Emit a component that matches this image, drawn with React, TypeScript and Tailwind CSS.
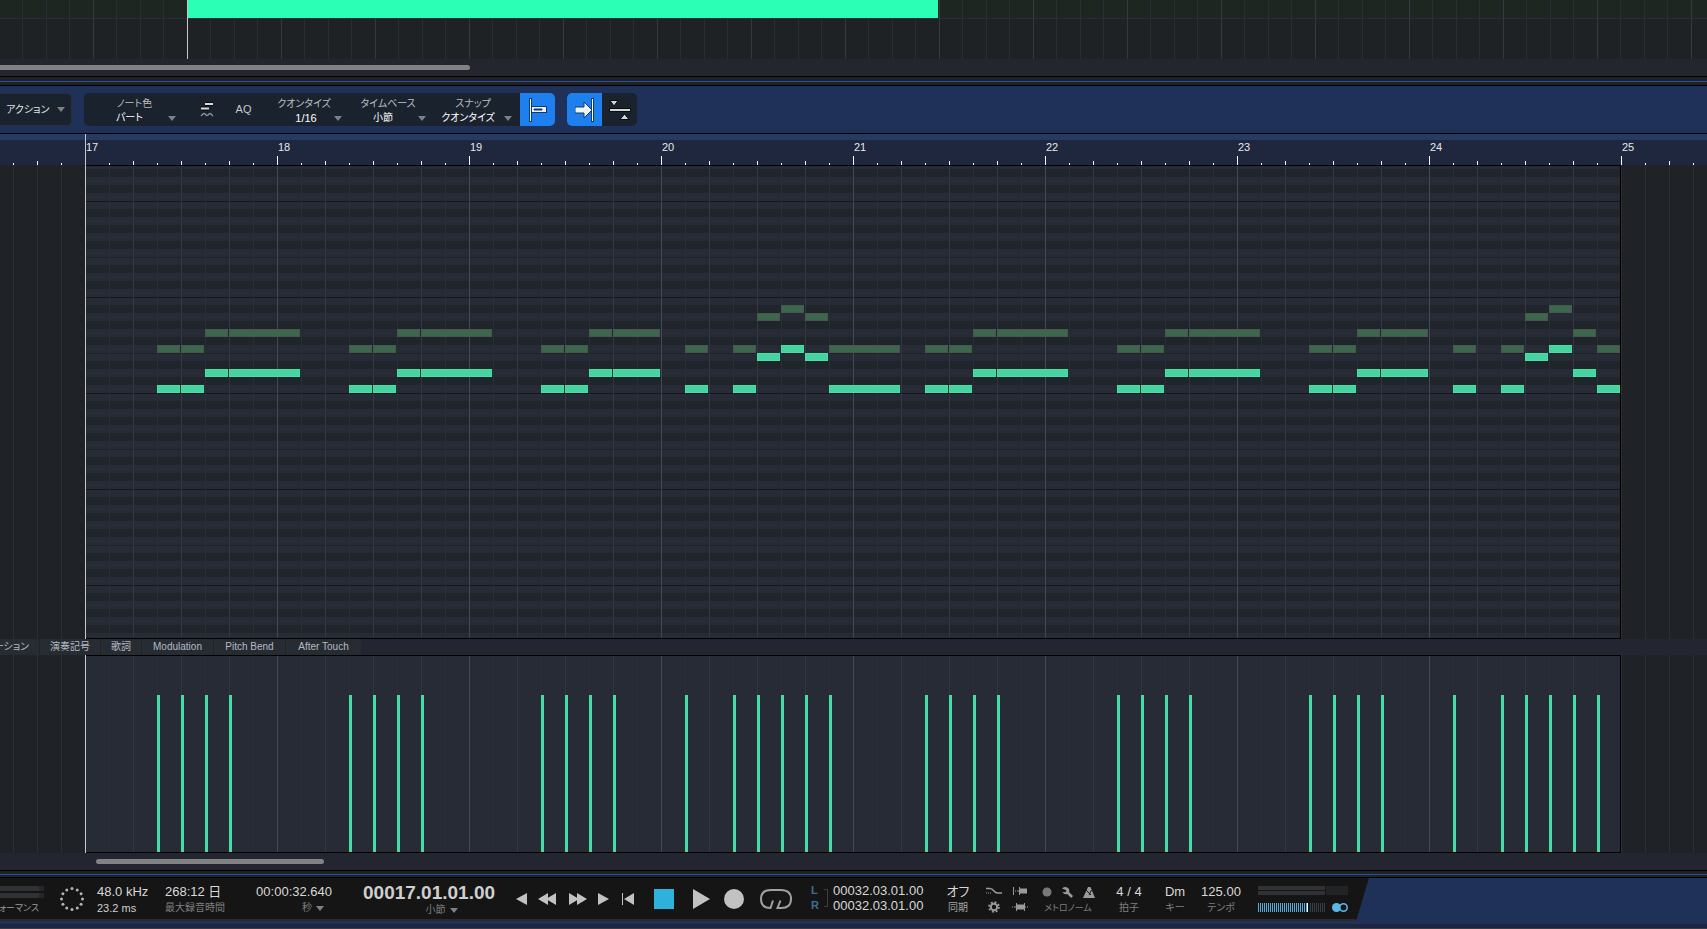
import type { ReactNode } from "react";
import clsx from "clsx";

const ORIGIN = 85;
const STEP = 24;
const BAR = STEP * 8;

// top to bottom, one octave of the keyboard
const OCTAVE = ["B", "A#", "A", "G#", "G", "F#", "F", "E", "D#", "D", "C#", "C"];
const ROWS = Array.from({ length: 61 }, (_, i) => OCTAVE[(i + 7) % 12]);

// [step, length in steps, y of the lower voice]
const PHRASE: [number, number, number][] = [
  [3, 1, 219], [4, 1, 219], [5, 1, 203], [6, 3, 203],
  [11, 1, 219], [12, 1, 219], [13, 1, 203], [14, 3, 203],
  [19, 1, 219], [20, 1, 219], [21, 1, 203], [22, 2, 203],
  [25, 1, 219], [27, 1, 219], [28, 1, 187], [29, 1, 179],
];
const NOTES: [number, number, number][] = [
  ...PHRASE,
  [30, 1, 187],
  [31, 3, 219],
  ...PHRASE.map(([s, l, y]): [number, number, number] => [s + 32, l, y]),
  [62, 1, 203],
  [63, 1, 219],
];

const BARS = [17, 18, 19, 20, 21, 22, 23, 24, 25];

const LANES = [
  { name: "演奏記号", width: "w-[61px]" },
  { name: "歌詞", width: "w-[41px]" },
  { name: "Modulation", width: "w-[72px]" },
  { name: "Pitch Bend", width: "w-[72px]" },
  { name: "After Touch", width: "w-[76px]" },
];

function Caret({ className }: { className?: string }) {
  return (
    <svg viewBox="0 0 8 5" className={clsx("h-[5px] w-2 shrink-0 fill-[#7d8084]", className)} aria-hidden="true">
      <path d="M0 0h8L4 5z" />
    </svg>
  );
}

function Dropdown({
  label,
  value,
  width,
  numeric,
}: {
  label: string;
  value: string;
  width: string;
  numeric?: boolean;
}) {
  return (
    <label className={clsx("relative flex h-full flex-col pt-[3px] text-center", width)}>
      <span className="h-[15px] text-[10px] leading-[15px] text-[#b9bdc1]">{label}</span>
      <select
        className={clsx(
          "h-[14px] w-full appearance-none bg-transparent leading-[14px] text-white [text-align-last:center]",
          numeric ? "pl-1 text-[11px]" : "pr-[10px] text-[10px]",
        )}
        defaultValue={value}
      >
        <option>{value}</option>
      </select>
      <Caret className="absolute right-0 bottom-[5px]" />
    </label>
  );
}

function Toolbar() {
  return (
    <div className="flex h-12 items-center border-b border-black bg-[#1f3158]">
      <button className="flex h-[33px] w-[72px] items-center gap-2 rounded-r-[5px] border border-l-0 border-[#2a3036] bg-[#1a222d] pl-[6px] text-[10px] whitespace-nowrap text-[#e4e6e8]">
        アクション
        <Caret />
      </button>
      <div className="ml-3 flex h-[33px] items-center rounded-[5px] bg-[#1a222d] pl-[9px]">
        <Dropdown label="ノート色" value="パート" width="w-[83px]" />
        <div className="flex w-[90px] pr-1 pl-3">
          <button className="flex w-[37px] justify-center" aria-label="ノート表示">
            <svg viewBox="0 0 14 17" className="h-[17px] w-[14px]" fill="none">
              <path d="M5 3h8M1 7.500h8" stroke="#090d12" strokeWidth="4" />
              <path d="M5 3h8M1 7.500h8" stroke="#d8dadb" strokeWidth="2" />
              <path d="M1 15l2-2q1-1 2 0l1 1q1 1 2 0l1-1q1-1 2 0l2 2" stroke="#8f9396" strokeWidth="1.300" />
            </svg>
          </button>
          <button className="w-[37px] text-[11px] text-[#c6c9cb]">AQ</button>
        </div>
        <Dropdown label="クオンタイズ" value="1/16" width="w-[76px]" numeric />
        <div className="w-2" />
        <Dropdown label="タイムベース" value="小節" width="w-[76px]" />
        <div className="w-2" />
        <Dropdown label="スナップ" value="クオンタイズ" width="w-[78px]" />
        <button className="ml-2 flex h-[33px] w-[35px] items-center justify-center rounded-r-[5px] bg-[#1e80ee]" aria-label="開始位置にスナップ">
          <svg viewBox="0 0 20 26" className="h-[26px] w-5">
            <path d="M1 1h3v24H1z" fill="#0d3a70" />
            <path d="M2 2h1v22H2z" fill="#fff" />
            <path d="M3 9h16v7H3z" fill="#0d3a70" />
            <path d="M4 10h14v5H4z" fill="#f2f2f2" />
            <path d="M6 12h8v1H6z" fill="#0d3a70" stroke="#0d3a70" />
          </svg>
        </button>
      </div>
      <div className="ml-3 flex h-[33px] overflow-hidden rounded-[5px] bg-[#1a222d]">
        <button className="flex w-[35px] items-center justify-center bg-[#1e80ee]" aria-label="自動スクロール">
          <svg viewBox="0 0 20 26" className="h-[26px] w-5">
            <path d="M0 10h9V5l8 8-8 8v-5H0z" fill="#f2f2f2" stroke="#0d3a70" />
            <path d="M16 1h3v24h-3z" fill="#0d3a70" />
            <path d="M17 2h1v22h-1z" fill="#fff" />
          </svg>
        </button>
        <button className="flex w-[35px] items-center justify-center" aria-label="カーソル追従">
          <svg viewBox="0 0 22 22" className="h-[22px] w-[22px]" fill="#d4d6d8" stroke="#080b10">
            <path d="M1 1.500h8L5 7zM11 20.500h9L15.500 15z" />
            <path d="M.5 9.500h21v3H.5z" />
          </svg>
        </button>
      </div>
    </div>
  );
}

function ArrangeView() {
  return (
    <div className="shrink-0 overflow-hidden">
      <div className="relative bg-[#1f2225]">
        <div className="h-[18px] bg-[#1d2621]" />
        <div className="h-[41px] border-t border-[#2a2e36]" />
        <div className="absolute inset-0 bg-[linear-gradient(90deg,#343840_1px,transparent_1px),linear-gradient(90deg,#2a2d33_1px,transparent_1px)] bg-[size:94px_100%,47px_100%] bg-[position:-1px_0,-1px_0]" />
        <div className="absolute inset-0 bg-[linear-gradient(90deg,#2a2d33_1px,transparent_1px)] bg-[size:47px_100%] bg-[position:22px_0]" />
        <div className="absolute top-0 left-[188px] h-[18px] w-[750px] bg-[#2bffb5]" />
        <div className="absolute top-0 left-[187px] h-full w-px bg-[#c8c8c8]" />
      </div>
      <div className="h-[17px] bg-[#23262f] pt-[6px]">
        <div className="h-[5px] w-[470px] rounded-r-full bg-[#828285]" />
      </div>
      <div className="h-[10px] border-y border-black bg-[#1f2127] pt-1">
        <div className="h-px bg-[#2550a4]" />
      </div>
    </div>
  );
}

function Ruler() {
  return (
    <div className="relative h-[31px] shrink-0 overflow-hidden bg-[#1e273d]">
      <div className="h-[6px] bg-[#293a60]" />
      <div className="absolute inset-0 bg-[linear-gradient(90deg,#fff_1px,transparent_1px),linear-gradient(90deg,#fff_1px,transparent_1px),linear-gradient(90deg,#fff_1px,transparent_1px)] bg-[size:192px_9px,48px_4px,24px_2px] bg-[position:85px_100%,85px_100%,85px_100%] bg-repeat-x" />
      {BARS.map((bar, i) => (
        <span
          key={bar}
          className="absolute top-[6px] text-[11px] leading-[15px] text-[#e6e8ea]"
          style={{ left: ORIGIN + 1 + i * BAR }}
        >
          {bar}
        </span>
      ))}
      <div className="absolute top-0 left-[85px] h-full w-px bg-[#c8c8c8]" />
    </div>
  );
}

function Lane({ className, children }: { className: string; children: ReactNode }) {
  return (
    <div className={clsx("relative overflow-hidden bg-[#1f2328] bg-[linear-gradient(90deg,#2d2f32_1px,transparent_1px)] bg-[size:24px_100%] bg-[position:13px_0] pl-[85px]", className)}>
      <div className="relative h-full w-[1536px] overflow-hidden border-y border-r border-black bg-[#272b35]">
        {children}
      </div>
      <div className="absolute top-0 left-[85px] h-full w-px bg-[#c8c8c8]" />
    </div>
  );
}

function GridLines() {
  return (
    <div className="absolute inset-0 bg-[linear-gradient(90deg,#434757_1px,transparent_1px),linear-gradient(90deg,#333743_1px,transparent_1px),linear-gradient(90deg,#2b2e35_1px,transparent_1px)] bg-[size:192px_100%,48px_100%,24px_100%]" />
  );
}

function PianoRoll() {
  return (
    <Lane className="min-h-[400px] flex-1">
      <div className="-mt-[5px]">
        {ROWS.map((key, i) => (
          <div
            key={i}
            className={clsx(
              "h-2",
              key.includes("#") && "bg-[#20242b]",
              key === "B" && "border-t border-[#13161c]",
              key === "E" && "border-t border-[#1e2229]",
            )}
          />
        ))}
      </div>
      <GridLines />
      {NOTES.map(([step, length, y]) => (
        <div key={step}>
          <div
            className="absolute h-2 border border-[#46584e] bg-[#3d674c]"
            style={{ left: step * STEP, top: y - 40, width: length * STEP - 1 }}
          />
          <div
            className="absolute h-2 border border-[#42e3a7] bg-[#47d2a0]"
            style={{ left: step * STEP, top: y, width: length * STEP - 1 }}
          />
        </div>
      ))}
    </Lane>
  );
}

function LaneTabs() {
  return (
    <div className="flex h-4 shrink-0 overflow-hidden bg-[#232630] text-[10px] leading-4 whitespace-nowrap text-[#b4bac4]">
      <button className="flex w-[39px] shrink-0 justify-end overflow-hidden bg-[#272c32] pr-[10px]">
        アーティキュレーション
      </button>
      {LANES.map((lane) => (
        <button key={lane.name} className={clsx("shrink-0 border-l border-[#1f2228] bg-[#272c32]", lane.width)}>
          {lane.name}
        </button>
      ))}
    </div>
  );
}

function VelocityLane() {
  return (
    <Lane className="h-[198px] shrink-0">
      <GridLines />
      {NOTES.map(([step]) => (
        <div
          key={step}
          className="absolute top-[39px] bottom-0 w-[3px] bg-[#47dba6]"
          style={{ left: step * STEP }}
        />
      ))}
    </Lane>
  );
}

function Readout({ value, label, className }: { value: string; label: ReactNode; className: string }) {
  return (
    <div className={clsx("flex shrink-0 flex-col pt-[6px] whitespace-nowrap", className)}>
      <span className="text-[13px] leading-4 text-[#d8d8d8]">{value}</span>
      <span className="flex items-center gap-1 text-[10px] leading-4 text-[#7f7f80]">{label}</span>
    </div>
  );
}

function TransportButton({
  name,
  width,
  viewBox,
  size,
  children,
}: {
  name: string;
  width: string;
  viewBox: string;
  size: string;
  children: ReactNode;
}) {
  return (
    <button aria-label={name} className={clsx("flex h-full shrink-0 items-center justify-center", width)}>
      <svg viewBox={viewBox} className={clsx("fill-[#c2c2c2]", size)}>
        {children}
      </svg>
    </button>
  );
}

function SyncIcons() {
  return (
    <div className="grid w-[54px] shrink-0 grid-cols-[26px_28px] grid-rows-[16px_16px] items-center pt-[5px]">
      <svg viewBox="0 0 16 8" className="h-2 w-4" fill="none" stroke="#9a9a9a">
        <path d="M0 1.500h4q2 0 4 2.500t4 2h4" strokeWidth="1.500" />
        <path d="M0 6h5" strokeDasharray="1 1" />
      </svg>
      <svg viewBox="0 0 16 8" className="h-2 w-4" fill="#9a9a9a">
        <path d="M1 0h1v8H1zM3 3.500h1v1H3zM5 3.500h2V0h1v1.500h7v5H8V8H7V4.500H5z" />
      </svg>
      <svg viewBox="0 0 12 12" className="ml-[2px] h-3 w-3" fill="none" stroke="#9a9a9a">
        <circle cx="6" cy="6" r="3.200" strokeWidth="2" />
        <circle cx="6" cy="6" r="4.900" strokeWidth="1.800" strokeDasharray="1.924 1.924" />
      </svg>
      <svg viewBox="0 0 17 8" className="h-2 w-[17px]" fill="#9a9a9a">
        <path d="M0 3.500h1v1H0zM2 3.500h2V0h1v1.500h7V0h1v3.500h1v1h-1V8h-1V6.500H5V8H4V4.500H2zM15 3.500h1v1h-1z" />
      </svg>
    </div>
  );
}

function MetronomeIcons() {
  return (
    <div className="flex w-14 shrink-0 flex-col items-center pt-[6px]">
      <div className="flex h-4 items-center gap-[10px]">
        <svg viewBox="0 0 10 10" className="h-[10px] w-[10px] fill-[#77797c]">
          <circle cx="5" cy="5" r="4.500" />
        </svg>
        <svg viewBox="0 0 11 11" className="h-[11px] w-[11px]">
          <path d="M0 1.500Q3-1 6 1q2 1.500 1 4l4 4-1.800 2L5.200 7Q2 8 .5 5l3 .3 1-2z" fill="#9a9a9a" />
        </svg>
        <svg viewBox="0 0 12 11" className="h-[11px] w-3">
          <path d="M5 0h2.500L12 11H0z" fill="#9a9a9a" />
          <path d="M1 1l7 7M8.500 3L6 8" stroke="#151515" />
        </svg>
      </div>
      <span className="text-[9px] leading-4 whitespace-nowrap text-[#7f7f80]">メトロノーム</span>
    </div>
  );
}

function OutputMeter() {
  return (
    <div className="w-[90px] shrink-0 pt-2">
      <div className="grid grid-cols-[67px_22px] gap-px">
        <div className="h-1 bg-[#303134]" />
        <div className="row-span-2 bg-[#212325]" />
        <div className="h-1 bg-[#303134]" />
      </div>
      <div className="mt-2 flex h-[9px]">
        <div className="w-[49px] bg-[linear-gradient(90deg,#57a9d8_1px,transparent_1px)] bg-[size:2px_100%]" />
        <div className="mr-[2px] w-px bg-white" />
        <div className="w-[15px] bg-[linear-gradient(90deg,#3a3f47_1px,transparent_1px)] bg-[size:2px_100%]" />
        <svg viewBox="0 0 16 9" className="ml-[7px] h-[9px] w-4">
          <circle cx="4.500" cy="4.500" r="4.500" fill="#58b9e6" />
          <circle cx="11.500" cy="4.500" r="3.700" fill="#151515" stroke="#58b9e6" strokeWidth="1.600" />
        </svg>
      </div>
    </div>
  );
}

function Transport() {
  const dots = Array.from({ length: 12 }, (_, i) => (i * Math.PI) / 6);

  return (
    <div className="shrink-0 overflow-hidden">
      <div className="flex bg-[#1f3158]">
        <div className="flex h-[43px] border-b-2 border-[#2b2b2d] bg-[#151515] pr-[21px] [clip-path:polygon(0_0,100%_0,calc(100%-13px)_100%,0_100%)]">
          <div className="w-11 shrink-0 overflow-hidden pt-2">
            <div className="h-[5px] border-r-[5px] border-[#252629] bg-[#303134]" />
            <div className="mt-[2px] h-[5px] border-r-[5px] border-[#252629] bg-[#303134]" />
            <div className="mt-[2px] flex justify-end pr-[5px] text-[9px] leading-4 whitespace-nowrap text-[#9a9a9a]">
              パフォーマンス
            </div>
          </div>
          <div className="flex w-[53px] shrink-0 items-center pl-4">
            <svg viewBox="-12 -12 24 24" className="h-6 w-6 fill-[#b4b4b4]">
              {dots.map((a) => (
                <circle key={a} cx={10.5 * Math.cos(a)} cy={10.5 * Math.sin(a)} r="1.500" />
              ))}
            </svg>
          </div>
          <Readout className="w-[68px]" value="48.0 kHz" label={<span className="text-[11px] text-[#d0d0d0]">23.2 ms</span>} />
          <Readout className="w-[67px]" value="268:12 日" label="最大録音時間" />
          <Readout className="w-[100px] items-end" value="00:00:32.640" label={<>秒 <Caret className="mr-2" /></>} />
          <div className="flex w-[178px] shrink-0 flex-col pt-[6px] pl-[31px]">
            <span className="text-[19px] leading-[18px] font-bold text-[#cfcfcf]">00017.01.01.00</span>
            <span className="flex w-[133px] items-center justify-center gap-1 pl-6 text-[10px] leading-4 text-[#7f7f80]">
              小節 <Caret />
            </span>
          </div>
          <TransportButton name="小節戻る" width="w-[22px]" viewBox="0 0 11 12" size="h-3 w-[11px]">
            <path d="M11 0v12L0 6z" />
          </TransportButton>
          <TransportButton name="巻き戻し" width="w-[30px]" viewBox="0 0 18 12" size="h-3 w-[18px]">
            <path d="M10 0v12L0 6zM18 0v12L8 6z" />
          </TransportButton>
          <TransportButton name="早送り" width="w-8" viewBox="0 0 18 12" size="h-3 w-[18px]">
            <path d="M0 0v12l10-6zM8 0v12l10-6z" />
          </TransportButton>
          <TransportButton name="小節進む" width="w-[18px]" viewBox="0 0 11 12" size="h-3 w-[11px]">
            <path d="M0 0v12l11-6z" />
          </TransportButton>
          <TransportButton name="先頭へ戻る" width="w-8" viewBox="0 0 12 12" size="h-3 w-3">
            <path d="M0 0h1v12H0zM12 0v12L2 6z" />
          </TransportButton>
          <TransportButton name="停止" width="w-10" viewBox="0 0 20 20" size="h-5 w-5">
            <path d="M0 0h20v20H0z" fill="#2eb1da" />
          </TransportButton>
          <TransportButton name="再生" width="w-[34px]" viewBox="0 0 17 20" size="h-5 w-[17px]">
            <path d="M0 0v20l17-10z" />
          </TransportButton>
          <TransportButton name="録音" width="w-8" viewBox="0 0 20 20" size="h-5 w-5">
            <circle cx="10" cy="10" r="10" />
          </TransportButton>
          <TransportButton name="ループ" width="w-[52px]" viewBox="0 0 32 20" size="h-5 w-8">
            <path
              d="M13 11.500L10.500 19Q1 19 1 10 1 1 11 1h10q10 0 10 9 0 9-10 9h-3.500l3-7.500"
              fill="none"
              stroke="#a0a0a0"
              strokeWidth="2"
            />
          </TransportButton>
          <div className="flex w-32 shrink-0 items-center pb-px pl-[9px] text-[13px] leading-[15px] text-[#d8d8d8]">
            <div className="w-[13px] text-[11px] font-bold text-[#3c6f90]">
              <div>L</div>
              <div>R</div>
            </div>
            <div className="mr-[5px] h-[18px] w-1 border border-l-0 border-[#3c3c3e]" />
            <div>
              <div>00032.03.01.00</div>
              <div>00032.03.01.00</div>
            </div>
          </div>
          <Readout className="w-14 items-center" value="オフ" label={<span className="text-[#a4a4a4]">同期</span>} />
          <SyncIcons />
          <MetronomeIcons />
          <Readout className="w-[66px] items-center" value="4 / 4" label="拍子" />
          <Readout className="w-[26px] items-center" value="Dm" label="キー" />
          <Readout className="mr-1 w-[66px] items-center" value="125.00" label="テンポ" />
          <OutputMeter />
        </div>
      </div>
      <div className="h-[3px] bg-[#1f3158]" />
      <div className="h-[5px] border-b border-[#3a3b45] bg-[#1b2440]" />
    </div>
  );
}

export default function App() {
  return (
    <div className="flex h-screen w-full flex-col overflow-hidden bg-[#1f2328] font-['Liberation_Sans','Noto_Sans_CJK_JP',sans-serif] [font-feature-settings:'palt']">
      <ArrangeView />
      <Toolbar />
      <Ruler />
      <PianoRoll />
      <LaneTabs />
      <VelocityLane />
      <div className="h-[17px] shrink-0 bg-[#232630] pt-[6px]">
        <div className="ml-24 h-[5px] w-[228px] rounded-full bg-[#828285]" />
      </div>
      <div className="h-2 shrink-0 border-y border-black bg-[#1f2127] pt-[3px]">
        <div className="h-px bg-[#2550a4]" />
      </div>
      <Transport />
    </div>
  );
}
